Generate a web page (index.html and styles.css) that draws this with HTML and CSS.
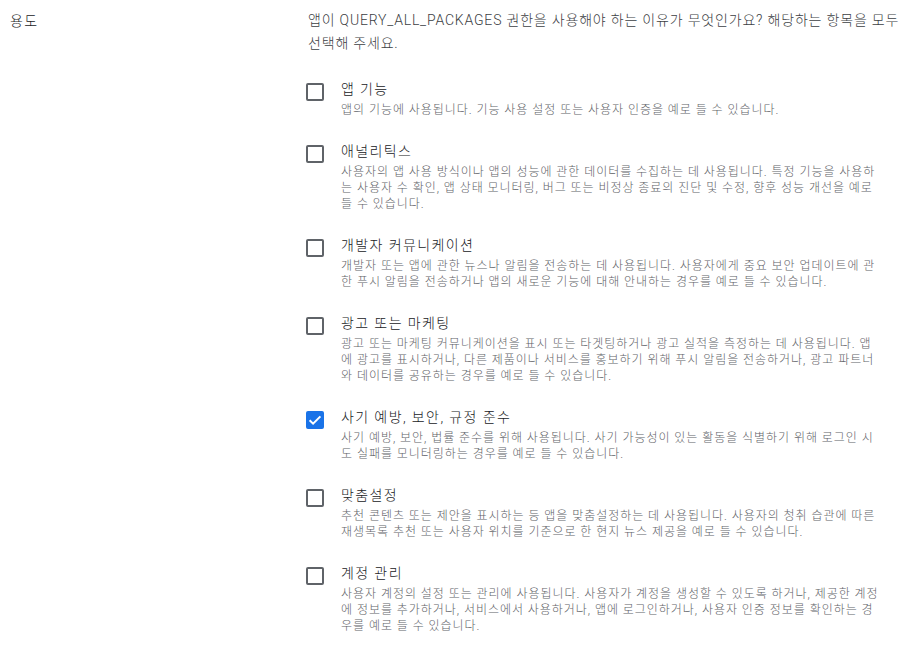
FILE: index.html
```html
<!DOCTYPE html>
<html lang="ko">
<head>
  <meta charset="UTF-8" />
  <meta name="viewport" content="width=device-width, initial-scale=1" />
  <title>용도</title>
  <link rel="stylesheet" href="styles.css">
</head>
<body>
  <section class="field-row">
    <div class="field-label">용도</div>

    <div class="field-body">
      <p class="question">앱이 QUERY_ALL_PACKAGES 권한을 사용해야 하는 이유가 무엇인가요? 해당하는 항목을 모두 선택해 주세요.</p>

      <ul class="options">
        <li class="option">
          <span class="check" role="checkbox" aria-checked="false"></span>
          <div class="option-text">
            <div class="option-title">앱 기능</div>
            <div class="option-desc">앱의 기능에 사용됩니다. 기능 사용 설정 또는 사용자 인증을 예로 들 수 있습니다.</div>
          </div>
        </li>
        <li class="option">
          <span class="check" role="checkbox" aria-checked="false"></span>
          <div class="option-text">
            <div class="option-title">애널리틱스</div>
            <div class="option-desc">사용자의 앱 사용 방식이나 앱의 성능에 관한 데이터를 수집하는 데 사용됩니다. 특정 기능을 사용하는 사용자 수 확인, 앱 상태 모니터링, 버그 또는 비정상 종료의 진단 및 수정, 향후 성능 개선을 예로 들 수 있습니다.</div>
          </div>
        </li>
        <li class="option">
          <span class="check" role="checkbox" aria-checked="false"></span>
          <div class="option-text">
            <div class="option-title">개발자 커뮤니케이션</div>
            <div class="option-desc">개발자 또는 앱에 관한 뉴스나 알림을 전송하는 데 사용됩니다. 사용자에게 중요 보안 업데이트에 관한 푸시 알림을 전송하거나 앱의 새로운 기능에 대해 안내하는 경우를 예로 들 수 있습니다.</div>
          </div>
        </li>
        <li class="option">
          <span class="check" role="checkbox" aria-checked="false"></span>
          <div class="option-text">
            <div class="option-title">광고 또는 마케팅</div>
            <div class="option-desc">광고 또는 마케팅 커뮤니케이션을 표시 또는 타겟팅하거나 광고 실적을 측정하는 데 사용됩니다. 앱에 광고를 표시하거나, 다른 제품이나 서비스를 홍보하기 위해 푸시 알림을 전송하거나, 광고 파트너와 데이터를 공유하는 경우를 예로 들 수 있습니다.</div>
          </div>
        </li>
        <li class="option">
          <span class="check checked" role="checkbox" aria-checked="true">
            <svg viewBox="0 0 18 18" width="18" height="18" aria-hidden="true">
              <path d="M3.6 9.2l3.5 3.5 7.3-7.3" fill="none" stroke="#fff" stroke-width="2"/>
            </svg>
          </span>
          <div class="option-text">
            <div class="option-title">사기 예방, 보안, 규정 준수</div>
            <div class="option-desc">사기 예방, 보안, 법률 준수를 위해 사용됩니다. 사기 가능성이 있는 활동을 식별하기 위해 로그인 시도 실패를 모니터링하는 경우를 예로 들 수 있습니다.</div>
          </div>
        </li>
        <li class="option">
          <span class="check" role="checkbox" aria-checked="false"></span>
          <div class="option-text">
            <div class="option-title">맞춤설정</div>
            <div class="option-desc">추천 콘텐츠 또는 제안을 표시하는 등 앱을 맞춤설정하는 데 사용됩니다. 사용자의 청취 습관에 따른 재생목록 추천 또는 사용자 위치를 기준으로 한 현지 뉴스 제공을 예로 들 수 있습니다.</div>
          </div>
        </li>
        <li class="option">
          <span class="check" role="checkbox" aria-checked="false"></span>
          <div class="option-text">
            <div class="option-title">계정 관리</div>
            <div class="option-desc">사용자 계정의 설정 또는 관리에 사용됩니다. 사용자가 계정을 생성할 수 있도록 하거나, 제공한 계정에 정보를 추가하거나, 서비스에서 사용하거나, 앱에 로그인하거나, 사용자 인증 정보를 확인하는 경우를 예로 들 수 있습니다.</div>
          </div>
        </li>
      </ul>
    </div>
  </section>
</body>
</html>
```

FILE: styles.css
```css
/* Base */
*, *::before, *::after {
  box-sizing: border-box;
}
body {
  margin: 0;
  padding: 0;
  font-family: Roboto, "Noto Sans CJK KR", sans-serif;
  font-size: 14px;
  font-weight: 300;
  color: #202124;
  background: #fff;
}

/* Field row: label column + content column */
.field-row {
  display: grid;
  grid-template-columns: 298px 598px;
  padding: 9px 0 0 10px;
}
.field-label {
  line-height: 24px;
  letter-spacing: 0.1em;
  color: #202124;
}

.question {
  margin: 0;
  line-height: 23px;
  letter-spacing: 0.058em;
  color: #3c4043;
}

/* Options */
.options {
  list-style: none;
  margin: 24px 0 0 0;
  padding: 0;
  display: flex;
  flex-direction: column;
  gap: 23px;
}
.option {
  display: flex;
  align-items: flex-start;
}
.check {
  flex: none;
  width: 18px;
  height: 18px;
  margin: 4px 17px 0 -2px;
  border: 2px solid #5f6368;
  border-radius: 2px;
}
.check.checked {
  border-color: #1a73e8;
  background: #1a73e8;
  position: relative;
}
.check.checked svg {
  position: absolute;
  top: -2px;
  left: -2px;
}
.option-text {
  max-width: 540px;
}
.option-title {
  line-height: 20px;
  letter-spacing: 0.1em;
  color: #202124;
}
.option-desc {
  margin-top: 3px;
  font-size: 12px;
  line-height: 16px;
  letter-spacing: 0.08em;
  color: #5f6368;
}
```
